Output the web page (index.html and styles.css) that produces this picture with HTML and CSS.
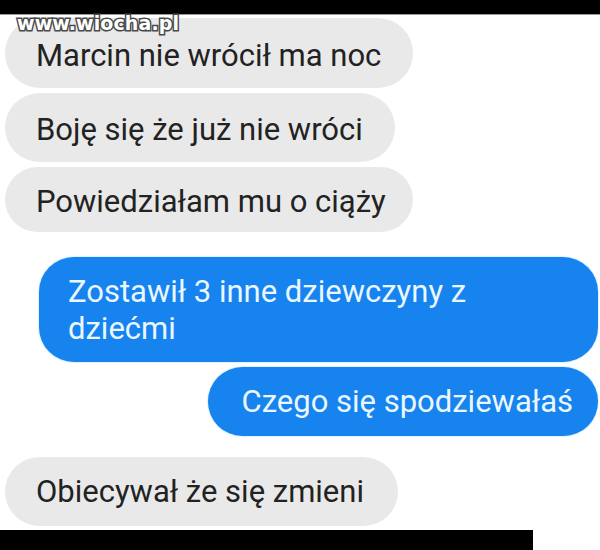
FILE: index.html
```html
<!DOCTYPE html>
<html lang="pl">
<head>
<meta charset="utf-8">
<title>Czat</title>
<link rel="stylesheet" href="styles.css">
</head>
<body>
<div class="screen">
  <div class="bar-top"></div>
  <div class="watermark">www.wiocha.pl</div>
  <div class="chat">
    <div class="group group-in">
      <div class="msg in first">Marcin nie wrócił ma noc</div>
      <div class="msg in">Boję się że już nie wróci</div>
      <div class="msg in short">Powiedziałam mu o ciąży</div>
    </div>
    <div class="group group-out">
      <div class="msg out wide">Zostawił 3 inne dziewczyny z dziećmi</div>
      <div class="msg out">Czego się spodziewałaś</div>
    </div>
    <div class="group group-in">
      <div class="msg in last">Obiecywał że się zmieni</div>
    </div>
  </div>
  <div class="bar-bottom"></div>
</div>
</body>
</html>
```
FILE: styles.css
```css
html, body {
  margin: 0;
  padding: 0;
  background: #ffffff;
}
.screen {
  position: relative;
  width: 600px;
  height: 550px;
  overflow: hidden;
  display: flex;
  flex-direction: column;
  font-family: Roboto, "Noto Sans", sans-serif;
}
.bar-top {
  height: 14px;
  background: #000;
  border-bottom: 1px solid #9a9a9a;
  flex: none;
}
.watermark {
  position: absolute;
  left: 17px;
  top: 11px;
  font-family: "DejaVu Sans", sans-serif;
  font-weight: bold;
  font-size: 19px;
  letter-spacing: 0.1px;
  color: #fff;
  -webkit-text-stroke: 3px #4a4a4a;
  paint-order: stroke fill;
  line-height: 24px;
}
.chat {
  flex: 1;
  display: flex;
  flex-direction: column;
  padding-top: 3px;
}
.group {
  display: flex;
  flex-direction: column;
  gap: 5px;
}
.group-in {
  align-items: flex-start;
  padding-left: 5px;
}
.group-out {
  align-items: flex-end;
  padding-right: 2px;
  margin: 25px 0 21px;
}
.msg {
  font-size: 31px;
  line-height: 37px;
  border-radius: 35px;
  padding: 18px 32px 14px 31px;
}
.msg.in {
  background: #e9e9e9;
  color: #222;
}
.msg.first {
  padding-top: 19px;
}
.msg.short {
  padding-top: 16px;
  padding-bottom: 12px;
  padding-right: 27px;
}
.msg.last {
  padding-top: 16px;
  padding-bottom: 16px;
  padding-right: 34px;
}
.msg.out {
  background: #1683ef;
  color: #eaf7ff;
  padding: 16px 25px 16px 33px;
  box-shadow: 0 0 2px #8fd0ff;
}
.msg.wide {
  width: 505px;
  padding-left: 29px;
  padding-bottom: 15px;
}
.bar-bottom {
  height: 20px;
  width: 533px;
  background: #000;
  flex: none;
}
```
